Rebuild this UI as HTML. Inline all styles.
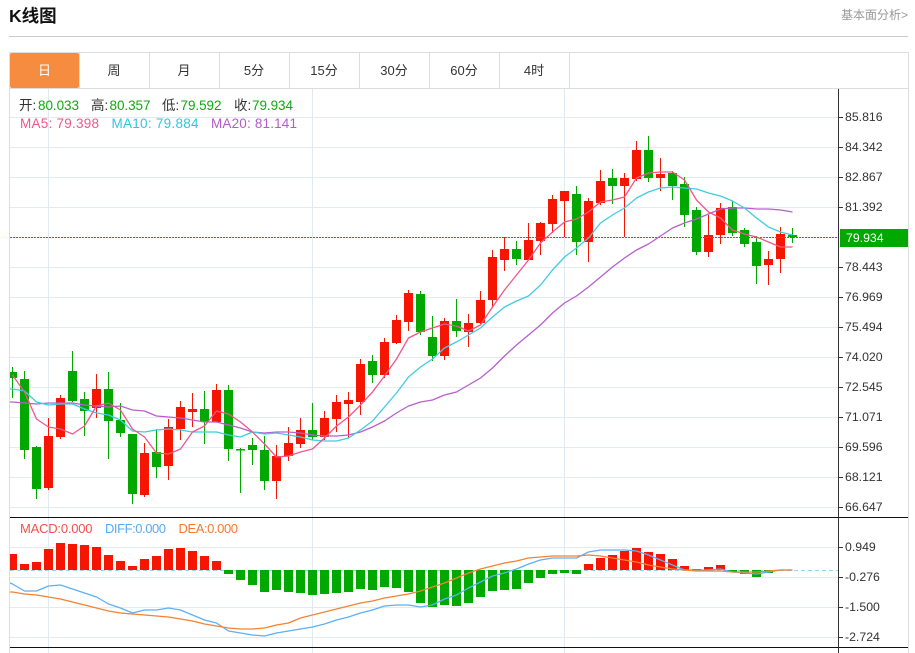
<!DOCTYPE html>
<html><head><meta charset="utf-8"><title>K线图</title>
<style>
html,body{margin:0;padding:0;background:#fff;width:915px;height:653px;overflow:hidden}
svg{display:block;position:absolute;left:0;top:0}
text{font-family:"Liberation Sans","Noto Sans CJK SC",sans-serif}
.l{fill:none;stroke-width:1.3;stroke-linejoin:round}
.ax text{font-size:12.3px;fill:#333}
</style></head><body>
<svg width="915" height="653" viewBox="0 0 915 653" xmlns="http://www.w3.org/2000/svg">
<defs><clipPath id="c"><rect x="10" y="89" width="828" height="564"/></clipPath></defs>

<text x="9" y="22" style="font-size:17.5px;font-weight:bold" fill="#111">K线图</text>
<text x="841" y="19" style="font-size:12px" fill="#999">基本面分析&gt;</text>
<path d="M9 36.5H908" stroke="#ccc" fill="none"/>

<!-- frame -->
<path d="M9.5 52V653M908.5 52V653M9 52.5H909M9 88.5H909" stroke="#ddd" fill="none"/>
<path d="M79.5 53V88M149.5 53V88M219.5 53V88M289.5 53V88M359.5 53V88M429.5 53V88M499.5 53V88M569.5 53V88" stroke="#ddd" fill="none"/>
<rect x="10" y="53" width="69" height="35" rx="2" fill="#f58c3f"/>
<g style="font-size:13px" text-anchor="middle" fill="#333">
<text x="44.5" y="75" fill="#fff">日</text>
<text x="114" y="75">周</text>
<text x="184" y="75">月</text>
<text x="254" y="75">5分</text>
<text x="324" y="75">15分</text>
<text x="394" y="75">30分</text>
<text x="464" y="75">60分</text>
<text x="534" y="75">4时</text>
</g>

<!-- grid -->
<path d="M10 117.5H838M10 147.5H838M10 177.5H838M10 207.5H838M10 267.5H838M10 297.5H838M10 327.5H838M10 357.5H838M10 387.5H838M10 417.5H838M10 447.5H838M10 477.5H838M10 507.5H838M10 547.5H838M10 577.5H838M10 607.5H838M10 637.5H838" stroke="#e3eaf1" fill="none"/>
<path d="M48.5 89V653M312.5 89V653M564.5 89V653" stroke="#dfeaf3" fill="none"/>

<g clip-path="url(#c)">
<!-- green wicks -->
<path fill="none" stroke="#00a800" stroke-width="1" d="M12.5 367V398M24.5 371V459M36.5 446V499M72.5 351V402M84.5 392V436M108.5 372V459M120.5 403V437M132.5 434V504M156.5 429V478M204.5 391V444M228.5 385V461M240.5 448V493M252.5 438V465M264.5 436V490M312.5 403V440M372.5 355V383M420.5 291V335M432.5 316V361M456.5 299V337M516.5 241V265M576.5 186V255M612.5 169V204M648.5 136V182M672.5 171V200M684.5 177V227M696.5 207V255M732.5 201V236M744.5 228V247M756.5 236V284M792.5 228V243"/>
<!-- green bodies -->
<path fill="none" stroke="#00a800" stroke-width="9" d="M12.5 372V378M24.5 379V450M36.5 447V489M72.5 371V401M84.5 399V411M108.5 389V421M120.5 420V433M132.5 434V494M156.5 452V467M204.5 409V422M228.5 390V449M240.5 449V450.5M252.5 445V450M264.5 450V481M312.5 430V437M372.5 361V375M420.5 294V332M432.5 337V356M456.5 321V331M516.5 249V259M576.5 194V242M612.5 178V186M648.5 150V178M672.5 173V186M684.5 184V215M696.5 210V252M732.5 207V233M744.5 230V244M756.5 242V266M792.5 235V237"/>
<!-- red wicks -->
<path fill="none" stroke="#f61500" stroke-width="1" d="M48.5 418V490M60.5 395V439M96.5 374V418M144.5 443V497M168.5 419V480M180.5 401V440M192.5 393V427M216.5 384V422M276.5 445V499M288.5 427V461M300.5 418V448M324.5 411V440M336.5 395V432M348.5 392V438M360.5 359V415M384.5 338V378M396.5 315V344M408.5 290V331M444.5 318V360M468.5 314V347M480.5 291V324M492.5 250V308M504.5 237V271M528.5 223V260M540.5 222V255M552.5 195V233M564.5 191V237M588.5 198V262M600.5 170V205M624.5 173V237M636.5 141V181M660.5 158V191M708.5 215V257M720.5 203V244M768.5 251V285M780.5 227V273"/>
<!-- red bodies -->
<path fill="none" stroke="#f61500" stroke-width="9" d="M48.5 436V488M60.5 398V437M96.5 389V408M144.5 453V495M168.5 427V466M180.5 407V429M192.5 409V412M216.5 390V422M276.5 456V481M288.5 443V456M300.5 430V444M324.5 418V437M336.5 402V419M348.5 400V404M360.5 364V402M384.5 342V375M396.5 320V343M408.5 293V322M444.5 321V356M468.5 323V332M480.5 300V323M492.5 257V300M504.5 249V260M528.5 240V260M540.5 223V241M552.5 199V224M564.5 191V201M588.5 201V242M600.5 181V203M624.5 178V186M636.5 150V179M660.5 174V178M708.5 235V252M720.5 208V235M768.5 259V265M780.5 234V259"/>

<!-- last price dashed -->
<path d="M10 237.5H838" stroke="#00b000" stroke-dasharray="2 1" fill="none"/>

<!-- MA20 -->
<polyline class="l" stroke="#b660cc" points="10,402 12.5,402 24.5,403 36.5,404 48.5,403 60.5,403 72.5,403 84.5,405 96.5,406 108.5,407 120.5,406 132.5,410 144.5,411 156.5,416 168.5,417 180.5,418 192.5,420 204.5,422 216.5,422 228.5,425 240.5,428 252.5,432 264.5,433 276.5,432 288.5,432 300.5,433 312.5,435 324.5,436 336.5,436 348.5,435 360.5,432 372.5,427 384.5,421 396.5,413 408.5,406 420.5,402 432.5,400 444.5,395 456.5,392 468.5,385 480.5,378 492.5,368 504.5,356 516.5,345 528.5,335 540.5,325 552.5,313 564.5,303 576.5,296 588.5,287 600.5,277 612.5,267 624.5,258 636.5,250 648.5,244 660.5,236 672.5,228 684.5,223 696.5,219 708.5,214 720.5,209 732.5,208 744.5,208 756.5,209 768.5,209 780.5,210 792.5,212"/>
<!-- MA10 -->
<polyline class="l" stroke="#3fcde0" points="10,389 12.5,389 24.5,391 36.5,402 48.5,405 60.5,404 72.5,404 84.5,409 96.5,413 108.5,415 120.5,420 132.5,431 144.5,432 156.5,430 168.5,429 180.5,430 192.5,432 204.5,432 216.5,432 228.5,435 240.5,437 252.5,432 264.5,434 276.5,433 288.5,435 300.5,437 312.5,440 324.5,441 336.5,441 348.5,438 360.5,430 372.5,421 384.5,407 396.5,393 408.5,377 420.5,367 432.5,359 444.5,348 456.5,342 468.5,335 480.5,328 492.5,317 504.5,307 516.5,301 528.5,296 540.5,285 552.5,270 564.5,257 576.5,248 588.5,238 600.5,223 612.5,215 624.5,208 636.5,198 648.5,192 660.5,188 672.5,187 684.5,188 696.5,189 708.5,193 720.5,196 732.5,201 744.5,208 756.5,218 768.5,227 780.5,232 792.5,235"/>
<!-- MA5 -->
<polyline class="l" stroke="#f2568a" points="12.5,375 24.5,392 36.5,419 48.5,427 60.5,429 72.5,434 84.5,426 96.5,406 108.5,403 120.5,410 132.5,429 144.5,437 156.5,453 168.5,454 180.5,449 192.5,432 204.5,426 216.5,411 228.5,414 240.5,422 252.5,432 264.5,444 276.5,457 288.5,456 300.5,452 312.5,449 324.5,438 336.5,426 348.5,417 360.5,405 372.5,392 384.5,376 396.5,359 408.5,338 420.5,332 432.5,328 444.5,324 456.5,326 468.5,331 480.5,325 492.5,307 504.5,290 516.5,275 528.5,260 540.5,243 552.5,232 564.5,222 576.5,219 588.5,212 600.5,202 612.5,200 624.5,197 636.5,178 648.5,173 660.5,172 672.5,172 684.5,180 696.5,200 708.5,212 720.5,218 732.5,230 744.5,234 756.5,237 768.5,242 780.5,247 792.5,247"/>

<!-- MACD zero -->
<path d="M10 570.5H838" stroke="#8fd8ee" stroke-dasharray="4 3" fill="none"/>
<!-- MACD bars -->
<path fill="none" stroke="#f61500" stroke-width="9" d="M12.5 554V570M24.5 564V570M36.5 562V570M48.5 549V570M60.5 543V570M72.5 544V570M84.5 545V570M96.5 547V570M108.5 555V570M120.5 561V570M132.5 566V570M144.5 559V570M156.5 556V570M168.5 549V570M180.5 548V570M192.5 551V570M204.5 556V570M216.5 561V570M588.5 564V570M600.5 558V570M612.5 555V570M624.5 551V570M636.5 548V570M648.5 552V570M660.5 554V570M672.5 559V570M684.5 566V570M696.5 569V570M708.5 567V570M720.5 565V570"/>
<path fill="none" stroke="#00a800" stroke-width="9" d="M228.5 570V574M240.5 570V580M252.5 570V585M264.5 570V592M276.5 570V590M288.5 570V592M300.5 570V593M312.5 570V595M324.5 570V594M336.5 570V593M348.5 570V592M360.5 570V589M372.5 570V590M384.5 570V587M396.5 570V588M408.5 570V592M420.5 570V603M432.5 570V607M444.5 570V605M456.5 570V606M468.5 570V603M480.5 570V597M492.5 570V591M504.5 570V590M516.5 570V589M528.5 570V583M540.5 570V578M552.5 570V574M564.5 570V573M576.5 570V574M732.5 570V572M744.5 570V574M756.5 570V577M768.5 570V573"/>
<!-- DIFF -->
<polyline class="l" stroke="#5db0f5" points="10,583 12.5,584 24.5,591 36.5,591 48.5,586 60.5,585 72.5,589 84.5,593 96.5,597 108.5,604 120.5,608 132.5,613 144.5,610 156.5,610 168.5,608 180.5,610 192.5,615 204.5,620 216.5,623 228.5,631 240.5,633 252.5,635 264.5,636 276.5,633 288.5,631 300.5,629 312.5,627 324.5,624 336.5,620 348.5,617 360.5,613 372.5,610 384.5,606 396.5,605 408.5,605 420.5,607 432.5,605 444.5,599 456.5,595 468.5,588 480.5,582 492.5,576 504.5,573 516.5,569 528.5,564 540.5,560 552.5,558 564.5,558 576.5,558 588.5,552 600.5,550 612.5,550 624.5,550 636.5,551 648.5,555 660.5,560 672.5,565 684.5,570 696.5,570 708.5,570 720.5,569 732.5,572 744.5,573 756.5,574 768.5,572 780.5,570 792.5,570"/>
<!-- DEA -->
<polyline class="l" stroke="#f58232" points="10,592 12.5,592 24.5,594 36.5,595 48.5,597 60.5,599 72.5,602 84.5,605 96.5,608 108.5,611 120.5,613 132.5,614 144.5,615 156.5,616 168.5,617 180.5,619 192.5,621 204.5,624 216.5,626 228.5,628 240.5,629 252.5,629 264.5,628 276.5,625 288.5,623 300.5,618 312.5,615 324.5,612 336.5,609 348.5,606 360.5,603 372.5,601 384.5,598 396.5,596 408.5,594 420.5,591 432.5,587 444.5,583 456.5,578 468.5,573 480.5,569 492.5,566 504.5,563 516.5,561 528.5,558 540.5,557 552.5,556 564.5,556 576.5,556 588.5,555 600.5,556 612.5,558 624.5,560 636.5,562 648.5,565 660.5,567 672.5,569 684.5,570 696.5,571 708.5,571 720.5,571 732.5,572 744.5,572 756.5,572 768.5,571 780.5,570 792.5,570"/>
</g>

<!-- separators and axis -->
<path d="M10 517.5H908M10 647.5H908" stroke="#111" fill="none"/>
<path d="M838.5 89V653" stroke="#333" fill="none"/>
<path d="M839 117.5h4M839 147.5h4M839 177.5h4M839 207.5h4M839 267.5h4M839 297.5h4M839 327.5h4M839 357.5h4M839 387.5h4M839 417.5h4M839 447.5h4M839 477.5h4M839 507.5h4M839 547.5h4M839 577.5h4M839 607.5h4M839 637.5h4" stroke="#333" fill="none"/>
<g class="ax">
<text x="845" y="121">85.816</text>
<text x="845" y="151">84.342</text>
<text x="845" y="181">82.867</text>
<text x="845" y="211">81.392</text>
<text x="845" y="271">78.443</text>
<text x="845" y="301">76.969</text>
<text x="845" y="331">75.494</text>
<text x="845" y="361">74.020</text>
<text x="845" y="391">72.545</text>
<text x="845" y="421">71.071</text>
<text x="845" y="451">69.596</text>
<text x="845" y="481">68.121</text>
<text x="845" y="511">66.647</text>
<text x="845" y="551">0.949</text>
<text x="845" y="581">-0.276</text>
<text x="845" y="611">-1.500</text>
<text x="845" y="641">-2.724</text>
</g>
<rect x="840" y="229" width="68" height="18" fill="#00a800"/>
<text x="846" y="242" style="font-size:12.3px" fill="#fff">79.934</text>

<!-- legends -->
<g style="font-size:13.5px">
<text x="19" y="110" fill="#333">开:</text>
<text x="38" y="110" fill="#11a811" textLength="41">80.033</text>
<text x="91" y="110" fill="#333">高:</text>
<text x="109.5" y="110" fill="#11a811" textLength="41">80.357</text>
<text x="162" y="110" fill="#333">低:</text>
<text x="180.5" y="110" fill="#11a811" textLength="41">79.592</text>
<text x="234" y="110" fill="#333">收:</text>
<text x="252" y="110" fill="#11a811" textLength="41">79.934</text>
<text x="20" y="128" fill="#f2558a" textLength="79">MA5: 79.398</text>
<text x="111.5" y="128" fill="#2fc6e0" textLength="87">MA10: 79.884</text>
<text x="211" y="128" fill="#b25cc8" textLength="86">MA20: 81.141</text>
</g>
<g style="font-size:13px">
<text x="20" y="533" fill="#f0514a" textLength="72.5">MACD:0.000</text>
<text x="105" y="533" fill="#5aabf0" textLength="61">DIFF:0.000</text>
<text x="178.5" y="533" fill="#f57a30" textLength="59.5">DEA:0.000</text>
</g>
</svg>
</body></html>
